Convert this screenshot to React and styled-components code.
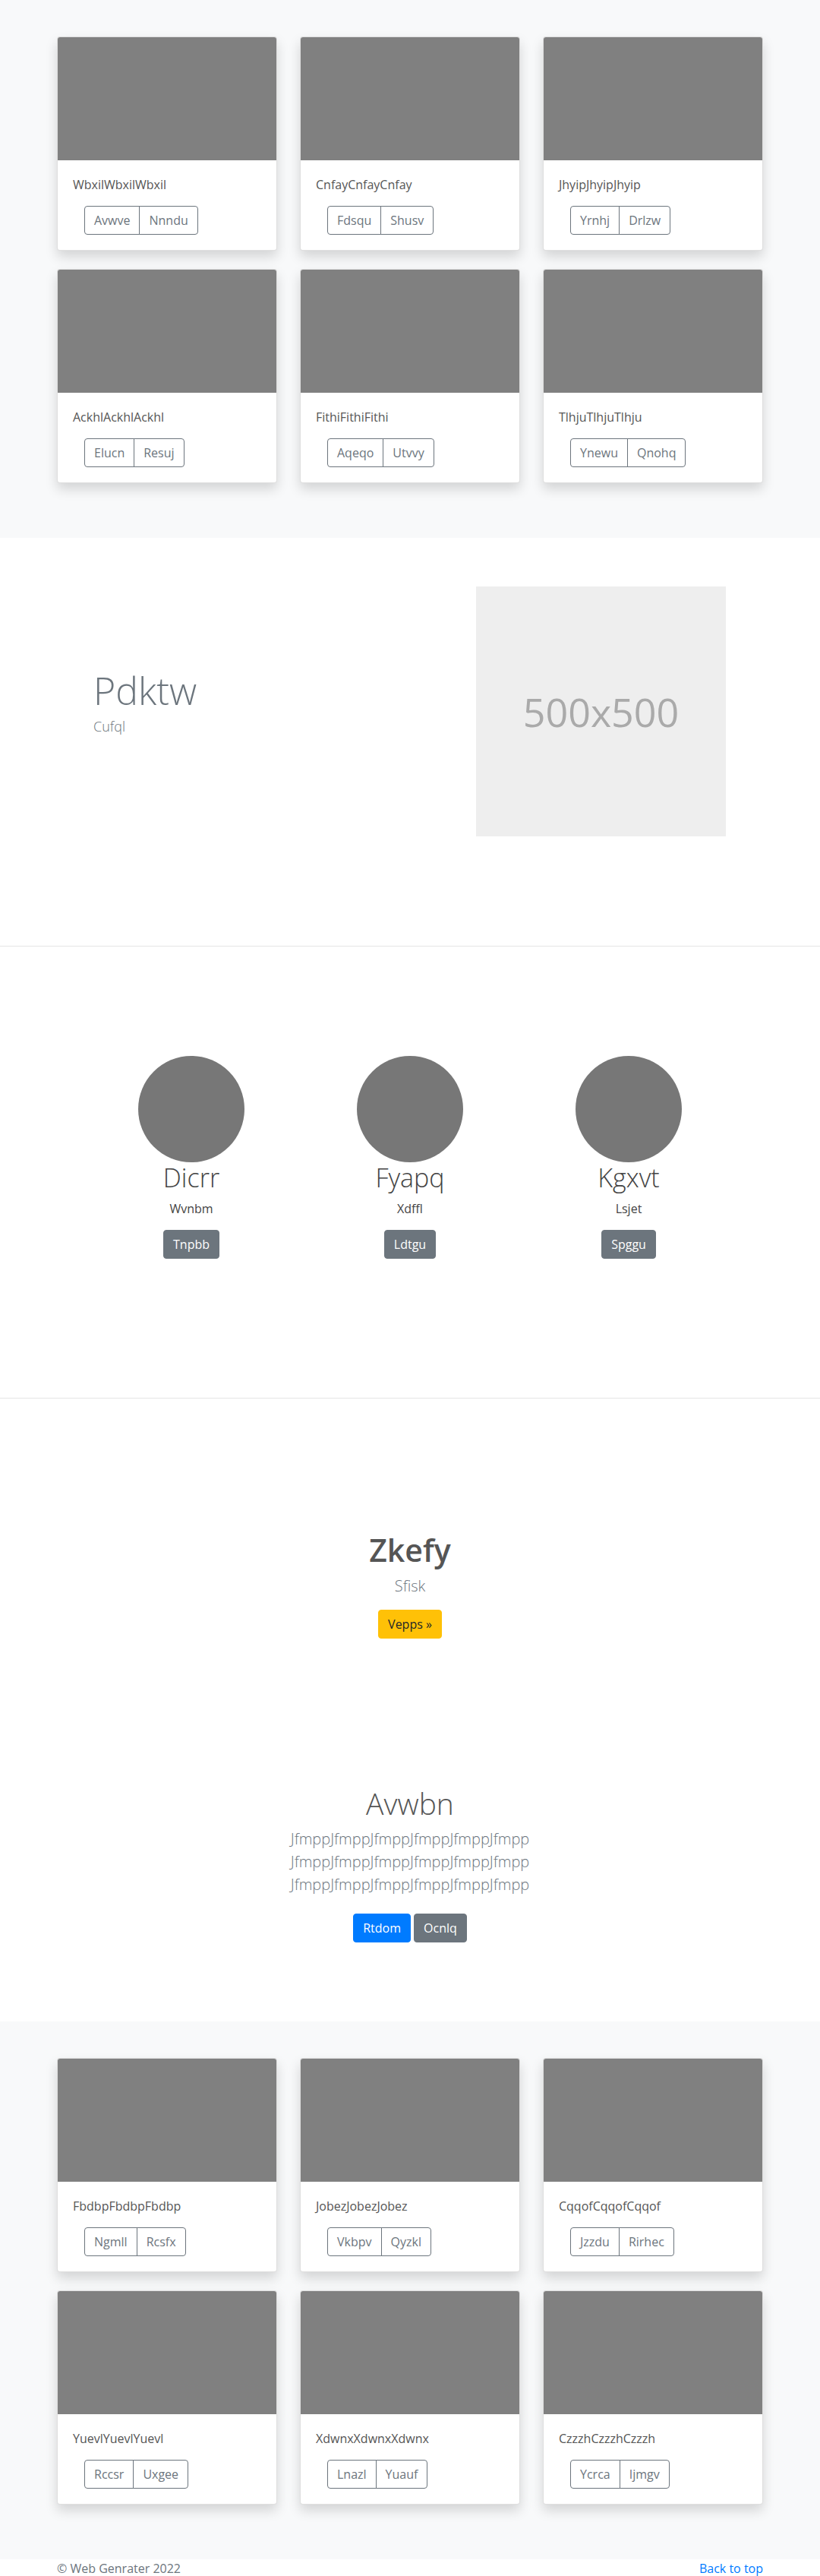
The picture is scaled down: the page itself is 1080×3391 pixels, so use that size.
import React from "react";
import styled, { createGlobalStyle } from "styled-components";

const GlobalStyle = createGlobalStyle`
  * { box-sizing: border-box; }
  body {
    margin: 0;
    background: #fff;
    font-family: "Open Sans", "Noto Sans", sans-serif;
    font-size: 16px;
    line-height: 1.5;
    color: #212529;
  }
`;

const Container = styled.div`
  width: 960px;
  margin: 0 auto;
  padding: 0 15px;
`;

/* ---------- Album ---------- */
const AlbumSection = styled.section`
  background: #f8f9fa;
  padding: 48px 0 72px;
`;

const CardGrid = styled.div`
  display: grid;
  grid-template-columns: repeat(3, 1fr);
  column-gap: 30px;
  row-gap: 24px;
`;

const Card = styled.div`
  background: #fff;
  border: 1px solid rgba(0, 0, 0, 0.125);
  border-radius: 4px;
  box-shadow: 0 8px 16px rgba(0, 0, 0, 0.15);
  overflow: hidden;
`;

const CardImage = styled.div`
  height: 162px;
  background: #808080;
`;

const CardBody = styled.div`
  padding: 20px;
`;

const CardText = styled.p`
  margin: 0 0 16px;
  font-size: 16px;
  line-height: 24px;
  color: #555;
`;

const BtnGroup = styled.div`
  display: inline-flex;
  margin-left: 15px;
`;

const OutlineBtn = styled.button`
  font-family: inherit;
  font-size: 16px;
  line-height: 24px;
  padding: 6px 12px;
  background: transparent;
  color: #6c757d;
  border: 1px solid #6c757d;
  border-radius: 0;
  &:first-child {
    border-radius: 4px 0 0 4px;
  }
  &:last-child {
    border-radius: 0 4px 4px 0;
    margin-left: -1px;
  }
`;

const Btn = styled.button`
  font-family: inherit;
  font-size: 16px;
  line-height: 24px;
  padding: 6px 12px;
  border: 1px solid ${(p) => p.$bg};
  border-radius: 4px;
  background: ${(p) => p.$bg};
  color: ${(p) => p.$fg};
`;

/* ---------- Hero ---------- */
const HeroSection = styled.section`
  padding: 64px 0 144px;
  border-bottom: 1px solid #e5e5e5;
`;

const HeroRow = styled.div`
  width: 960px;
  margin: 0 auto;
  display: grid;
  grid-template-columns: 1fr 1fr;
  align-items: center;
`;

const HeroText = styled.div`
  padding: 0 15px 0 63px;
  margin-bottom: 24px;
`;

const HeroTitle = styled.h1`
  margin: 0 0 4px;
  font-size: 50px;
  font-weight: 300;
  line-height: 1.2;
  color: #6c757d;
`;

const HeroSub = styled.p`
  margin: 0;
  font-size: 18px;
  line-height: 27px;
  font-weight: 300;
  color: #6c757d;
`;

const HeroMedia = styled.div`
  display: flex;
  justify-content: flex-end;
  padding-right: 64px;
`;

const Placeholder = styled.div`
  width: 329px;
  height: 329px;
  background: #eeeeee;
  color: #aaaaaa;
  font-size: 52px;
  display: flex;
  align-items: center;
  justify-content: center;
`;

/* ---------- Team ---------- */
const TeamSection = styled.section`
  padding: 144px 0 183px;
  border-bottom: 1px solid #e5e5e5;
`;

const TeamGrid = styled.div`
  width: 864px;
  margin: 0 auto;
  display: grid;
  grid-template-columns: repeat(3, 1fr);
`;

const Member = styled.div`
  display: flex;
  flex-direction: column;
  align-items: center;
  text-align: center;
`;

const Avatar = styled.div`
  width: 140px;
  height: 140px;
  border-radius: 50%;
  background: #777;
`;

const MemberName = styled.h2`
  margin: 0 0 8px;
  font-size: 34px;
  font-weight: 300;
  line-height: 1.2;
  color: #444;
`;

const MemberRole = styled.p`
  margin: 0 0 16px;
  font-size: 16px;
  line-height: 24px;
  color: #444;
`;

/* ---------- CTA ---------- */
const CtaSection = styled.section`
  padding: 175px 0 96px;
  text-align: center;
`;

const CtaTitle = styled.h1`
  margin: 0 0 8px;
  font-size: 41px;
  font-weight: 600;
  line-height: 1.2;
  color: #555;
`;

const Lead = styled.p`
  margin: 0 0 16px;
  font-size: 20px;
  line-height: 30px;
  font-weight: 300;
  color: #6c757d;
`;

/* ---------- About ---------- */
const AboutSection = styled.section`
  padding: 98px 0 104px;
  text-align: center;
`;

const AboutTitle = styled.h1`
  margin: 0 0 8px;
  font-size: 39px;
  font-weight: 300;
  line-height: 1.2;
  color: #555;
`;

const AboutText = styled(Lead)`
  margin-bottom: 23px;
`;

const BtnRow = styled.div`
  display: flex;
  justify-content: center;
  gap: 4px;
`;

/* ---------- Footer ---------- */
const Footer = styled.footer`
  background: #fff;
`;

const FooterInner = styled(Container)`
  display: flex;
  justify-content: space-between;
  line-height: 24px;
  font-size: 16px;
`;

const FooterText = styled.span`
  color: #6c757d;
`;

const FooterLink = styled.a`
  color: #007bff;
  text-decoration: none;
`;

const album1 = [
  ["WbxilWbxilWbxil", "Avwve", "Nnndu"],
  ["CnfayCnfayCnfay", "Fdsqu", "Shusv"],
  ["JhyipJhyipJhyip", "Yrnhj", "Drlzw"],
  ["AckhlAckhlAckhl", "Elucn", "Resuj"],
  ["FithiFithiFithi", "Aqeqo", "Utvvy"],
  ["TlhjuTlhjuTlhju", "Ynewu", "Qnohq"],
];

const album2 = [
  ["FbdbpFbdbpFbdbp", "Ngmll", "Rcsfx"],
  ["JobezJobezJobez", "Vkbpv", "Qyzkl"],
  ["CqqofCqqofCqqof", "Jzzdu", "Rirhec"],
  ["YuevlYuevlYuevl", "Rccsr", "Uxgee"],
  ["XdwnxXdwnxXdwnx", "Lnazl", "Yuauf"],
  ["CzzzhCzzzhCzzzh", "Ycrca", "Ijmgv"],
];

const team = [
  ["Dicrr", "Wvnbm", "Tnpbb"],
  ["Fyapq", "Xdffl", "Ldtgu"],
  ["Kgxvt", "Lsjet", "Spggu"],
];

function Album({ items }) {
  return (
    <AlbumSection>
      <Container>
        <CardGrid>
          {items.map(([text, a, b]) => (
            <Card key={text}>
              <CardImage />
              <CardBody>
                <CardText>{text}</CardText>
                <BtnGroup>
                  <OutlineBtn>{a}</OutlineBtn>
                  <OutlineBtn>{b}</OutlineBtn>
                </BtnGroup>
              </CardBody>
            </Card>
          ))}
        </CardGrid>
      </Container>
    </AlbumSection>
  );
}

export default function App() {
  const line = "Jfmpp".repeat(6);
  return (
    <>
      <GlobalStyle />
      <Album items={album1} />

      <HeroSection>
        <HeroRow>
          <HeroText>
            <HeroTitle>Pdktw</HeroTitle>
            <HeroSub>Cufql</HeroSub>
          </HeroText>
          <HeroMedia>
            <Placeholder>500x500</Placeholder>
          </HeroMedia>
        </HeroRow>
      </HeroSection>

      <TeamSection>
        <TeamGrid>
          {team.map(([name, role, btn]) => (
            <Member key={name}>
              <Avatar />
              <MemberName>{name}</MemberName>
              <MemberRole>{role}</MemberRole>
              <Btn $bg="#6c757d" $fg="#fff">{btn}</Btn>
            </Member>
          ))}
        </TeamGrid>
      </TeamSection>

      <CtaSection>
        <CtaTitle>Zkefy</CtaTitle>
        <Lead>Sfisk</Lead>
        <Btn $bg="#ffc107" $fg="#212529">Vepps »</Btn>
      </CtaSection>

      <AboutSection>
        <AboutTitle>Avwbn</AboutTitle>
        <AboutText>
          {line}
          <br />
          {line}
          <br />
          {line}
        </AboutText>
        <BtnRow>
          <Btn $bg="#007bff" $fg="#fff">Rtdom</Btn>
          <Btn $bg="#6c757d" $fg="#fff">Ocnlq</Btn>
        </BtnRow>
      </AboutSection>

      <Album items={album2} />

      <Footer>
        <FooterInner>
          <FooterText>© Web Genrater 2022</FooterText>
          <FooterLink href="#">Back to top</FooterLink>
        </FooterInner>
      </Footer>
    </>
  );
}
